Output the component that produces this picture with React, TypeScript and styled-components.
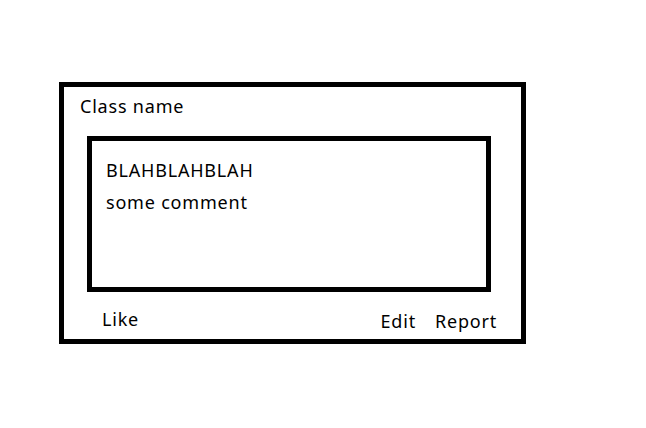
import styled, { createGlobalStyle } from "styled-components";

const GlobalStyle = createGlobalStyle`
    html, body {
        margin: 0;
        padding: 0;
        background: #ffffff;
    }
    body {
        font-family: "Noto Sans", "Open Sans", sans-serif;
        color: #000000;
    }
`;

interface Comment {
    title: string;
    body: string;
}

const comment: Comment = {
    title: "BLAHBLAHBLAH",
    body: "some comment",
};

function App() {
    return (
        <>
            <GlobalStyle />
            <Page>
                <ClassCard>
                    <ClassName>Class name</ClassName>
                    <CommentBox>
                        <CommentLine>{comment.title}</CommentLine>
                        <CommentLine>{comment.body}</CommentLine>
                    </CommentBox>
                    <Footer>
                        <Action $lift>Like</Action>
                        <Actions>
                            <Action>Edit</Action>
                            <Action>Report</Action>
                        </Actions>
                    </Footer>
                </ClassCard>
            </Page>
        </>
    );
}

const Page = styled.div`
    width: 646px;
    height: 428px;
    padding: 82px 0 0 59px;
    box-sizing: border-box;
`;

const ClassCard = styled.div`
    width: 467px;
    height: 262px;
    box-sizing: border-box;
    border: 5px solid #000;
    display: flex;
    flex-direction: column;
`;

const Text = styled.div`
    font-size: 18px;
    line-height: 24px;
    letter-spacing: 0.8px;
`;

const ClassName = styled(Text)`
    margin: 7px 0 0 16px;
`;

const CommentBox = styled.div`
    width: 404px;
    height: 156px;
    margin: 18px 0 0 23px;
    box-sizing: border-box;
    border: 5px solid #000;
    padding: 17px 14px 0;
    display: flex;
    flex-direction: column;
    gap: 8px;
`;

const CommentLine = styled(Text)``;

const Footer = styled.div`
    display: flex;
    justify-content: space-between;
    align-items: flex-start;
    margin-top: 15px;
    padding: 0 24px 0 38px;
`;

const Actions = styled.div`
    display: flex;
    gap: 19px;
`;

const Action = styled(Text)<{ $lift?: boolean }>`
    margin-top: ${({ $lift }) => ($lift ? "0" : "2px")};
`;

export default App;
